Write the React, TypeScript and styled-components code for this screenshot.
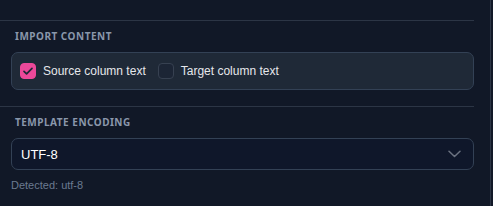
import React from 'react'
import styled, { createGlobalStyle } from 'styled-components'

const GlobalStyle = createGlobalStyle`
    html, body {
        margin: 0;
        padding: 0;
        background: #111827;
    }
    body {
        font-family: "Liberation Sans", Arial, sans-serif;
    }
`

const Page = styled.div`
    display: flex;
    height: 206px;
    background: #111827;
`

const Panel = styled.div`
    width: 474px;
    padding-top: 20px;
    padding-right: 16px;
    border-right: 1px solid #2c3545;
`

const Section = styled.section`
    border-top: 1px solid #2c3545;
    padding: 9px 0 16px 11px;
`

const SectionLabel = styled.div`
    font-family: "Noto Sans", sans-serif;
    font-size: 10px;
    line-height: 13px;
    font-weight: 700;
    letter-spacing: 0.05em;
    text-transform: uppercase;
    color: #8a97ab;
    padding-left: 4px;
    margin-bottom: 9px;
`

const OptionBox = styled.div`
    display: flex;
    align-items: center;
    gap: 12px;
    height: 36px;
    padding: 0 8px;
    background: #1f2937;
    border: 1px solid #334155;
    border-radius: 7px;
`

const Option = styled.label`
    display: flex;
    align-items: center;
    gap: 7px;
    font-size: 12px;
    color: #e5e7eb;
    cursor: pointer;
`

const Box = styled.span<{ $checked: boolean }>`
    width: 16px;
    height: 16px;
    box-sizing: border-box;
    border-radius: 4px;
    display: flex;
    align-items: center;
    justify-content: center;
    background: ${p => (p.$checked ? '#ec4899' : '#1c2535')};
    border: 1px solid ${p => (p.$checked ? '#ec4899' : '#374151')};
`

const Select = styled.div`
    display: flex;
    align-items: center;
    justify-content: space-between;
    height: 30px;
    padding: 0 12px 0 9px;
    background: #0f172a;
    border: 1px solid #334155;
    border-radius: 7px;
    font-size: 13px;
    color: #ffffff;
`

const Hint = styled.div`
    margin-top: 9px;
    font-size: 11px;
    color: #6b7a90;
`

const Checkbox = ({ checked, label }: { checked: boolean; label: string }) => (
    <Option>
        <Box $checked={checked}>
            {checked && (
                <svg width="12" height="12" viewBox="0 0 12 12" fill="none">
                    <path d="M2 6.3l2.6 2.6L10 3.4" stroke="#1f2937" strokeWidth="1.7" strokeLinecap="round" strokeLinejoin="round" />
                </svg>
            )}
        </Box>
        {label}
    </Option>
)

const App = () => {
    return (
        <Page>
            <GlobalStyle />
            <Panel>
                <Section>
                    <SectionLabel>Import content</SectionLabel>
                    <OptionBox>
                        <Checkbox checked label="Source column text" />
                        <Checkbox checked={false} label="Target column text" />
                    </OptionBox>
                </Section>
                <Section>
                    <SectionLabel>Template encoding</SectionLabel>
                    <Select>
                        UTF-8
                        <svg width="13" height="8" viewBox="0 0 13 8" fill="none">
                            <path d="M1 1.2l5.5 5.3 5.5-5.3" stroke="#6b7280" strokeWidth="1.5" strokeLinecap="round" strokeLinejoin="round" />
                        </svg>
                    </Select>
                    <Hint>Detected: utf-8</Hint>
                </Section>
            </Panel>
        </Page>
    )
}

export default App
